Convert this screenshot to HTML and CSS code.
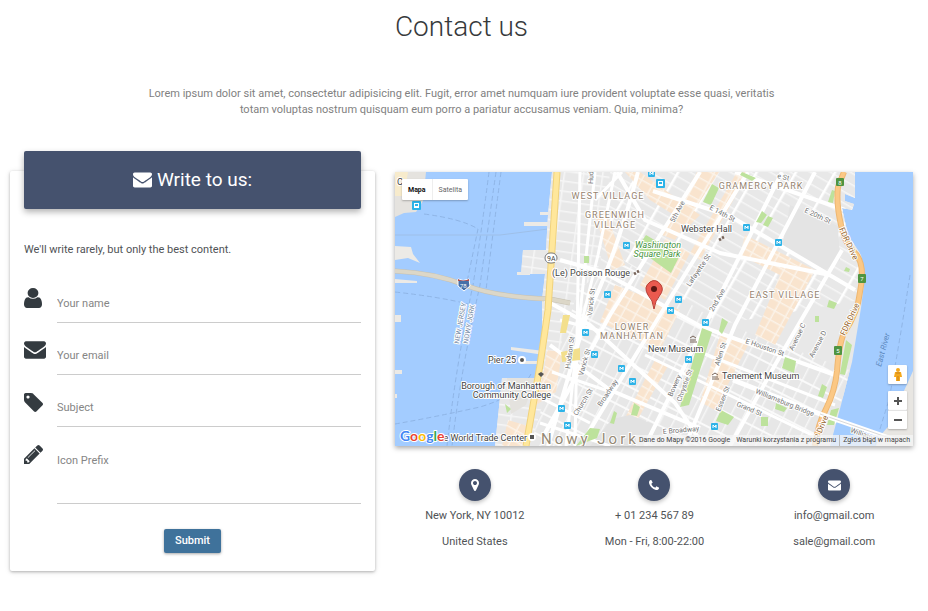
FILE: index.html
```html
<!DOCTYPE html>
<html lang="en">
<head>
<meta charset="utf-8">
<meta name="viewport" content="width=device-width, initial-scale=1">
<title>Contact us</title>
<link rel="stylesheet" href="styles.css">
</head>
<body>
<svg class="sprite" aria-hidden="true">
  <symbol id="envelope" viewBox="0 256 1792 1408"><path d="M1792 710v794q0 66-47 113t-113 47h-1472q-66 0-113-47t-47-113v-794q44 49 101 87 362 246 497 345 57 42 92.500 65.500t94.500 48 110 24.500h2q51 0 110-24.500t94.500-48 92.500-65.500q170-123 498-345 57-39 100-87zm0-294q0 79-49 151t-122 123q-376 261-468 325-10 7-42.500 31t-54 38.500-52 32.500-57.500 27-50 9h-2q-23 0-50-9t-57.500-27-52-32.500-54-38.500-42.500-31q-91-64-262-182.500t-205-142.500q-62-42-117-115.500t-55-136.500q0-78 41.500-130t118.500-52h1472q65 0 112.500 47t47.500 113z"/></symbol>
  <symbol id="user" viewBox="256 128 1280 1536" preserveAspectRatio="none"><path d="M1536 1399q0 109-62.500 187t-150.500 78h-854q-88 0-150.500-78t-62.500-187q0-85 8.500-160.500t31.500-152 58.500-131 94-89 134.500-34.500q131 128 313 128t313-128q76 0 134.500 34.500t94 89 58.500 131 31.500 152 8.500 160.500zm-256-887q0 159-112.500 271.500t-271.500 112.500-271.500-112.500-112.500-271.500 112.500-271.500 271.500-112.500 271.500 112.500 112.500 271.500z"/></symbol>
  <symbol id="tag" viewBox="128 128 1515 1515"><path d="M576 448q0-53-37.500-90.500t-90.500-37.500-90.500 37.500-37.500 90.500 37.500 90.500 90.500 37.500 90.500-37.500 37.500-90.500zm1067 576q0 53-37 90l-491 492q-39 37-91 37-53 0-90-37l-715-716q-38-37-64.500-101t-26.500-117v-416q0-52 38-90t90-38h416q53 0 117 26.500t102 64.500l715 714q37 39 37 91z"/></symbol>
  <symbol id="pencil" viewBox="128 149 1515 1515"><path d="M491 1536l91-91-235-235-91 91v107h128v128h107zm523-928q0-22-22-22-10 0-17 7l-542 542q-7 7-7 17 0 22 22 22 10 0 17-7l542-542q7-7 7-17zm-54-192l416 416-832 832h-416v-416zm683 96q0 53-37 90l-166 166-416-416 166-165q36-38 90-38 53 0 91 38l235 234q37 39 37 91z"/></symbol>
  <symbol id="marker" viewBox="384 128 1024 1536"><path d="M1152 640q0-106-75-181t-181-75-181 75-75 181 75 181 181 75 181-75 75-181zm256 0q0 109-33 179l-364 774q-16 33-47.500 52t-67.500 19-67.500-19-46.500-52l-365-774q-33-70-33-179 0-212 150-362t362-150 362 150 150 362z"/></symbol>
  <symbol id="phone" viewBox="192 128 1408 1408"><path d="M1600 1240q0 27-10 70.500t-21 68.500q-21 50-122 106-94 51-186 51-27 0-52.500-3.500t-57.500-12.500-47.500-14.500-55.500-20.500-49-18q-98-35-175-83-128-79-264.500-215.500t-215.500-264.500q-48-77-83-175-3-9-18-49t-20.500-55.500-14.500-47.500-12.500-57.500-3.500-52.500q0-92 51-186 56-101 106-122 25-11 68.500-21t70.500-10q14 0 21 3 18 6 53 76 11 19 30 54t35 63.500 31 53.500q3 4 17.500 25t21.500 35.500 7 28.500q0 20-28.500 50t-62 55-62 53-28.500 46q0 9 5 22.500t8.500 20.500 14 24 11.500 19q76 137 174 235t235 174q2 1 19 11.500t24 14 20.500 8.500 22.500 5q18 0 46-28.500t53-62 55-62 50-28.500q14 0 28.500 7t35.500 21.500 25 17.500q25 15 53.500 31t63.500 35 54 30q70 35 76 53 3 7 3 21z"/></symbol>
</svg>

<section class="contact">
  <h1 class="contact-title">Contact us</h1>
  <p class="contact-lead">Lorem ipsum dolor sit amet, consectetur adipisicing elit. Fugit, error amet numquam iure provident voluptate esse quasi, veritatis totam voluptas nostrum quisquam eum porro a pariatur accusamus veniam. Quia, minima?</p>

  <div class="contact-grid">
    <form class="card">
      <h2 class="card-header"><svg class="header-icon" aria-hidden="true"><use href="#envelope"/></svg>Write to us:</h2>
      <p class="card-note">We'll write rarely, but only the best content.</p>
      <div class="fields">
        <div class="field">
          <label class="field-icon" for="name" aria-label="Your name"><svg class="icon-user"><use href="#user"/></svg></label>
          <input class="field-input" id="name" type="text" placeholder="Your name">
        </div>
        <div class="field">
          <label class="field-icon" for="email" aria-label="Your email"><svg class="icon-envelope"><use href="#envelope"/></svg></label>
          <input class="field-input" id="email" type="email" placeholder="Your email">
        </div>
        <div class="field">
          <label class="field-icon" for="subject" aria-label="Subject"><svg class="icon-square"><use href="#tag"/></svg></label>
          <input class="field-input" id="subject" type="text" placeholder="Subject">
        </div>
        <div class="field">
          <label class="field-icon" for="message" aria-label="Icon Prefix"><svg class="icon-square"><use href="#pencil"/></svg></label>
          <textarea class="field-input field-area" id="message" placeholder="Icon Prefix"></textarea>
        </div>
      </div>
      <button class="submit" type="submit">Submit</button>
    </form>

    <div class="side">
      <div class="map">
        <svg class="map-canvas" viewBox="395 172 518 274" preserveAspectRatio="xMidYMid slice" role="img" aria-label="Map of Lower Manhattan">
          <defs>
            <pattern id="gridEast" width="34" height="10" patternUnits="userSpaceOnUse" patternTransform="translate(700 200) rotate(30)">
              <rect width="34" height="10" fill="#e8e8e8"/><path d="M0 0H34" stroke="#f6f6f6" stroke-width="3"/><path d="M0 0V10" stroke="#fff" stroke-width="5"/>
            </pattern>
            <pattern id="gridSouth" width="12" height="21" patternUnits="userSpaceOnUse" patternTransform="translate(600 300) rotate(27)">
              <rect width="12" height="21" fill="#e7e7e7"/><path d="M0 0V21" stroke="#f6f6f6" stroke-width="3"/><path d="M0 0H12" stroke="#fafafa" stroke-width="4"/>
            </pattern>
            <pattern id="gridWest" width="19" height="10" patternUnits="userSpaceOnUse" patternTransform="translate(560 200) rotate(8)">
              <rect width="19" height="10" fill="#e8e8e8"/><path d="M0 0H19" stroke="#f6f6f6" stroke-width="3"/><path d="M0 0V10" stroke="#f6f6f6" stroke-width="3"/>
            </pattern>
            <pattern id="shops" width="12" height="10" patternUnits="userSpaceOnUse" patternTransform="translate(700 200) rotate(29)">
              <rect width="12" height="10" fill="#f9e4ce"/><path d="M0 0H12V10" fill="none" stroke="#fbf3e9" stroke-width="3"/>
            </pattern>
            <clipPath id="manhattan"><path d="M552 172H855V198L845 194V201L854 204L852 210L842 208L848 235L861 255L865 275L861 308L852 362L841 405L830 446H495L502 378H538L542 345V300L545 274H521L523 250H546L548 215Z"/></clipPath>
            <g id="metro"><rect x="-4" y="-4" width="7" height="7" rx="1" fill="#2db3e8"/><path d="M-2 1V-2L0 0L1 -2V1" fill="none" stroke="#fff"/></g>
            <g id="bus"><rect x="-5" y="-5" width="9" height="9" rx="1" fill="#2db3e8"/><path d="M-3 -3H2V2H-3Z" fill="#fff"/><path d="M-2 -2H1V0H-2Z" fill="#2db3e8"/></g>
          </defs>

          <!-- water and shorelines -->
          <rect x="395" y="172" width="518" height="274" fill="#a3ccff"/>
          <path d="M395 172H426L423 201L416 212L404 213L395 217Z" fill="#e5e3df"/>
          <path d="M395 172H408L404 196H395Z" fill="#f7ebcc"/>
          <path d="M395 246L411 247L413 254L420 263L408 258L395 260ZM395 279L417 281V283H395ZM395 315H401V322H395ZM395 370H402V374H395ZM395 394H397V398H395Z" fill="#eceae6"/>
          <path d="M540 212H553V215H540ZM524 222H552V226H524ZM517 272H530V275H517ZM511 347L544 351V355L511 350ZM520 361H542V364H520Z" fill="#eceae6"/>
          <path d="M913 371L903 393L893 407L894 420L879 437L876 446H913Z" fill="#e8e6e2"/>
          <g fill="none" stroke="#8fb5e6" stroke-dasharray="5 3">
            <path d="M489 172Q481 235 473 285Q456 365 447 446M496 172Q487 235 480 285Q460 375 452 446M501 172Q492 240 486 290M424 214Q462 219 478 229L467 282M395 292Q440 297 468 304M395 424Q435 417 480 407Q520 395 531 374M910 275Q900 340 889 400Q881 425 875 446"/>
          </g>
          <path d="M395 235H500L572 226" fill="none" stroke="#9ebfe8"/>

          <!-- street grid -->
          <g clip-path="url(#manhattan)">
            <rect x="490" y="172" width="380" height="274" fill="#e8e8e8"/>
            <path d="M540 172H635L574 330L545 400L530 446H490V340Z" fill="url(#gridWest)"/>
            <path d="M610 172H860V300L700 328L600 265Z" fill="url(#gridEast)"/>
            <path d="M578 290L620 258L715 320L855 372L820 446H530Z" fill="url(#gridSouth)"/>
            <path d="M625 172H640L700 215L690 225L650 200ZM745 235L815 270L775 345L755 335L780 275L740 255ZM697 172H719L675 240L662 235ZM666 238L690 253L665 300L640 285ZM615 285L680 310L660 350L600 322ZM720 335L748 345L715 410L700 402ZM655 360L668 366L635 424L625 418ZM595 215L606 212L625 265L612 270ZM737 172H749L700 260L690 253ZM547 350L562 352L556 392L536 405L544 370ZM508 420L528 426L525 446H502Z" fill="url(#shops)"/>
            <path d="M507 378H535L526 405L511 414Z" fill="#e4e2de"/>
            <path d="M790 205L838 226L840 260L825 270L782 248Z" fill="#e4e4e4"/>
            <path d="M630 415L665 429L645 446H590L612 419Z" fill="#e2e2e2"/>
            <g fill="none" stroke="#fff" stroke-linejoin="round">
              <path stroke-width="4" d="M638 172Q615 260 585 320L548 446M700 172L610 315L544 435M748 172L660 315L590 430M782 172L700 335L645 446M815 172L735 325L685 446M842 250L775 365L730 446M617 172L645 220L720 253L830 275M735 172L845 210M653 191L730 216L855 290M560 260L603 272L700 326L835 375M545 300L590 325L675 403L704 446M550 345L610 390L700 428"/>
              <path stroke-width="3" d="M580 172L575 446M595 172L566 446M615 172L598 255L570 370M622 172L595 200M545 400L590 423M560 320L608 333M552 372L614 393M540 423L610 446M645 355L750 405L818 438M695 350L835 405"/>
              <path stroke-width="5" d="M733 380L820 414L895 446"/>
            </g>
            <path d="M563 315H570L566 333H560ZM561 352L580 348V360L562 362Z" fill="#f3df8c"/>
            <path d="M646 235L680 255L671 273L657 263L637 248ZM712 184L719 188L711 205L703 202ZM702 328L712 332L689 405L680 407ZM721 410L734 417L728 425L716 421ZM634 403L640 407L637 416L631 415ZM590 428L600 429L597 438L576 446ZM614 411L617 413L614 424L610 423ZM762 211L767 215L761 223L756 222ZM768 216L773 218L768 227L763 225ZM785 357L796 361L794 373L782 368ZM822 384L827 387L823 398L818 396ZM832 190L835 191L833 203L828 202ZM846 340L852 345L845 375L840 374ZM831 410L839 408L834 425H827ZM829 300L837 303L834 309L827 307ZM742 172L756 178L752 181L740 175ZM584 256H589V263H584ZM761 417H768V426H761ZM776 403L787 408L784 412L775 409ZM722 318L728 322L722 334L719 331ZM846 267L850 269L849 272L844 271ZM815 316H819V322H815ZM505 404L511 409L507 413Z" fill="#bde29c"/>
          </g>

          <!-- highways and bridges -->
          <path d="M395 271Q435 273 465 285T550 299L570 303" fill="none" stroke="#c6c1b2" stroke-width="5"/>
          <path d="M395 271Q435 273 465 285T550 299L570 303" fill="none" stroke="#dcd7c8" stroke-width="4"/>
          <path d="M557 172L552 250L548 310L540 365L526 446" fill="none" stroke="#f0d27c" stroke-width="7"/>
          <path d="M557 172L552 250L548 310L540 365L526 446" fill="none" stroke="#ffe79b" stroke-width="5"/>
          <path d="M844 172L838 187Q836 203 841 225Q844 242 854 252Q866 263 860 292Q858 312 844 333Q839 344 837 371Q835 391 826 409Q818 424 815 446" fill="none" stroke="#eeb772" stroke-width="6"/>
          <path d="M844 172L838 187Q836 203 841 225Q844 242 854 252Q866 263 860 292Q858 312 844 333Q839 344 837 371Q835 391 826 409Q818 424 815 446" fill="none" stroke="#fbc885" stroke-width="4"/>
          <path d="M820 414L895 440" stroke="#fff" stroke-width="5"/><path d="M820 414L895 440" stroke="#d8d8d8"/>

          <!-- transit stops and route shields -->
          <use href="#bus" x="661" y="184"/><use href="#metro" x="652" y="174"/><use href="#metro" x="627" y="246"/><use href="#metro" x="747" y="228"/><use href="#metro" x="779" y="243"/><use href="#metro" x="608" y="295"/><use href="#metro" x="679" y="300"/><use href="#metro" x="671" y="311"/><use href="#metro" x="706" y="323"/><use href="#metro" x="586" y="333"/><use href="#metro" x="595" y="355"/><use href="#metro" x="622" y="369"/><use href="#metro" x="633" y="382"/><use href="#metro" x="689" y="360"/><use href="#metro" x="562" y="409"/><use href="#metro" x="568" y="426"/><use href="#metro" x="715" y="427"/><use href="#bus" x="417" y="206"/>
          <g fill="#4f9440"><rect x="836" y="178" width="8" height="8" rx="1"/><rect x="858" y="274" width="8" height="9" rx="1"/><rect x="834" y="346" width="8" height="9" rx="1"/></g>
          <g class="shield-text" text-anchor="middle"><text x="840" y="185">8</text><text x="862" y="281">7</text><text x="838" y="353">5</text></g>
          <rect x="545" y="253" width="12" height="10" rx="5" fill="#fff" stroke="#777"/><text class="street dark" x="547" y="261">9A</text>
          <path d="M458 279Q463 282 469 279L470 286L464 291L458 286Z" fill="#466fa8" stroke="#fff"/><path d="M458 279Q463 282 469 279V281H458Z" fill="#ae4d4d"/><text class="shield-text" x="460" y="288">78</text>

          <!-- place names -->
          <g class="district" text-anchor="middle">
            <text x="608" y="199">WEST VILLAGE</text><text x="615" y="218">GREENWICH</text><text x="615" y="228">VILLAGE</text>
            <text x="761" y="189">GRAMERCY PARK</text><text x="785" y="298">EAST VILLAGE</text>
            <text x="632" y="330">LOWER</text><text x="632" y="339">MANHATTAN</text>
          </g>
          <text class="city" x="541" y="444">Nowy Jork</text>
          <g class="place">
            <text x="681" y="232">Webster Hall</text><text x="552" y="276">(Le) Poisson Rouge</text>
            <text x="648" y="352">New Museum</text><text x="722" y="379">Tenement Museum</text>
            <text x="488" y="363">Pier 25</text><text x="551" y="389" text-anchor="end">Borough of Manhattan</text><text x="551" y="398" text-anchor="end">Community College</text>
            <text x="527" y="441" text-anchor="end">e World Trade Center</text><text x="397" y="185">C</text>
          </g>
          <g class="park" text-anchor="middle"><text x="658" y="248">Washington</text><text x="657" y="257">Square Park</text></g>
          <g class="street">
            <text transform="translate(593 184) rotate(-88)">Hud</text>
            <text transform="translate(674 223) rotate(-62)">5th Ave</text>
            <text transform="translate(709 209) rotate(28)">E 14th St</text>
            <text transform="translate(804 212) rotate(25)">E 20th St</text>
            <text transform="translate(777 178) rotate(12)">e St</text>
            <text transform="translate(690 287) rotate(-56)">Lafayette St</text>
            <text transform="translate(713 312) rotate(-60)">2nd Ave</text>
            <text transform="translate(592 316) rotate(-84)">Varick St</text>
            <text transform="translate(570 369) rotate(-82)">Hudson St</text>
            <text transform="translate(583 376) rotate(-74)">Varick St</text>
            <text transform="translate(577 416) rotate(-58)">Church St</text>
            <text transform="translate(601 407) rotate(-56)">Broadway</text>
            <text transform="translate(672 397) rotate(-66)">Bowery</text>
            <text transform="translate(681 402) rotate(-70)">Chrystie St</text>
            <text transform="translate(719 366) rotate(-72)">Allen St</text>
            <text transform="translate(720 412) rotate(-68)">Essex St</text>
            <text transform="translate(745 343) rotate(19)">E Houston St</text>
            <text transform="translate(793 351) rotate(-64)">Avenue C</text>
            <text transform="translate(813 358) rotate(-62)">Avenue D</text>
            <text transform="translate(755 393) rotate(22)">Williamsburg Bridge</text>
            <text transform="translate(736 406) rotate(22)">Grand St</text>
            <text transform="translate(663 434) rotate(-5)">E Broadway</text>
            <text transform="translate(850 432) rotate(20)">Williams</text>
          </g>
          <g class="highway"><text transform="translate(839 229) rotate(65)">FDR Drive</text><text transform="translate(845 336) rotate(-65)">FDR Drive</text><text transform="translate(819 440) rotate(-68)">R Drive</text></g>
          <g class="border-name"><text transform="translate(459 344) rotate(-80)">NEW JERSEY</text><text transform="translate(468 344) rotate(-80)">NOWY JORK</text></g>
          <text class="river" transform="translate(881 367) rotate(-75)">East River</text>
          <g fill="#fff"><circle cx="522" cy="360" r="4"/><circle cx="532" cy="437" r="4"/></g>
          <g fill="#555"><circle cx="522" cy="360" r="2"/><path d="M530 435H534V439H530ZM538 374L541 372L544 374L541 377Z"/></g>
          <g fill="none" stroke="#776459"><path d="M634 274L636 273M637 272L639 271M719 240L721 239M722 238L724 237" stroke-width="3"/><path d="M690 338L693 336L696 338M690 342H697M691 339V341M693 339V341M695 339V341M712 375L715 373L718 375M712 379H719M713 376V378M715 376V378M717 376V378"/></g>
          <path d="M654 309Q653 300 648 295Q643 287 650 282Q656 278 661 285Q664 290 660 295Q655 301 654 309Z" fill="#ea5a4f" stroke="#b73e35"/><circle cx="654" cy="289" r="3" fill="#5b1713"/>
          <text class="logo" x="400" y="441"><tspan fill="#4285f4">G</tspan><tspan fill="#ea4335">o</tspan><tspan fill="#fbbc05">o</tspan><tspan fill="#4285f4">g</tspan><tspan fill="#34a853">l</tspan><tspan fill="#ea4335">e</tspan></text>
        </svg>
        <div class="map-types"><button class="map-type active" type="button">Mapa</button><button class="map-type" type="button">Satelita</button></div>
        <div class="map-controls">
          <button class="control" type="button" aria-label="Street View"><svg class="pegman" viewBox="0 0 10 15"><circle cx="5" cy="3" r="2" fill="#f5a81c"/><path d="M2 5H8L9 10H7V14H3V10H1Z" fill="#f5a81c"/><path d="M3 6H7M5 9V14" stroke="#c8811a"/></svg></button>
          <div class="zoom"><button class="control" type="button" aria-label="Zoom in"><svg class="sign" viewBox="0 0 8 8"><path d="M4 0V8M0 4H8"/></svg></button><button class="control" type="button" aria-label="Zoom out"><svg class="sign" viewBox="0 0 8 8"><path d="M0 4H8"/></svg></button></div>
        </div>
        <div class="map-credits"><span>Dane do Mapy ©2016 Google</span><a href="#">Warunki korzystania z programu</a><a class="divided" href="#">Zgłoś błąd w mapach</a></div>
      </div>

      <div class="details">
        <div class="detail"><span class="badge"><svg class="badge-marker"><use href="#marker"/></svg></span><p>New York, NY 10012</p><p>United States</p></div>
        <div class="detail"><span class="badge"><svg class="badge-phone"><use href="#phone"/></svg></span><p>+ 01 234 567 89</p><p>Mon - Fri, 8:00-22:00</p></div>
        <div class="detail"><span class="badge"><svg class="badge-mail"><use href="#envelope"/></svg></span><p>info@gmail.com</p><p>sale@gmail.com</p></div>
      </div>
    </div>
  </div>
</section>
</body>
</html>
```
FILE: styles.css
```css
* { box-sizing: border-box; }

body {
  margin: 0;
  background: #fff;
  color: #505356;
  font-family: Roboto, "Liberation Sans", sans-serif;
  font-size: 11px;
  line-height: 16px;
}

h1, h2, p { margin: 0; }
button, input, textarea { font: inherit; }
svg { display: block; fill: currentColor; }
.sprite { position: absolute; width: 0; height: 0; }

.contact { padding: 9px 15px 32px 10px; }

.contact-title {
  color: #373a3c;
  font-size: 28px;
  font-weight: 300;
  line-height: 36px;
  text-align: center;
}

.contact-lead {
  max-width: 650px;
  margin: 41px auto 53px;
  color: #818181;
  text-align: center;
}

.contact-grid {
  display: grid;
  grid-template-columns: 365fr 518fr;
  gap: 20px;
  align-items: start;
}

.card {
  display: flex;
  flex-direction: column;
  padding: 0 14px 18px;
  border-radius: 2px;
  box-shadow: 0 1px 3px rgba(0, 0, 0, .26), 0 1px 6px rgba(0, 0, 0, .1);
}

.card-header {
  display: flex;
  justify-content: center;
  align-items: center;
  gap: 5px;
  height: 58px;
  margin-top: -20px;
  border-radius: 2px;
  background: #45526e;
  box-shadow: 0 3px 6px rgba(0, 0, 0, .3);
  color: #fff;
  font-size: 19px;
  font-weight: 400;
}

.header-icon { width: 19px; height: 16px; }
.card-note { margin: 33px 0 27px; }
.fields { display: grid; gap: 14px; }
.field { display: grid; grid-template-columns: 33px 1fr; }
.field-icon { display: flex; align-items: center; height: 26px; color: #343b40; }
.icon-user { width: 18px; height: 20px; }
.icon-envelope { width: 22px; height: 18px; }
.icon-square { width: 19px; height: 19px; }

.field-input {
  display: block;
  width: 100%;
  height: 38px;
  padding: 0;
  border: 0;
  border-bottom: 1px solid #ccc;
  outline: 0;
  background: transparent;
  color: #505356;
}

.field-input::placeholder { color: #858585; opacity: 1; }
.field-area { height: 63px; padding-top: 12px; resize: none; }

.submit {
  align-self: center;
  height: 24px;
  margin-top: 25px;
  padding: 0 11px;
  border: 0;
  border-radius: 2px;
  background: #3f729b;
  box-shadow: 0 1px 3px rgba(0, 0, 0, .35);
  color: #fff;
  font-weight: 500;
}

.map {
  position: relative;
  height: 274px;
  margin-top: 1px;
  box-shadow: 0 2px 5px rgba(0, 0, 0, .35);
}

.map-canvas { width: 100%; height: 100%; }
.map-canvas text { stroke: #fff; stroke-width: 2px; stroke-linejoin: round; paint-order: stroke; }
.map-canvas .district { fill: #958370; font-size: 9px; letter-spacing: 1px; }
.map-canvas .city { fill: #958976; font-size: 15px; letter-spacing: 3px; }
.map-canvas .place { fill: #444; font-size: 9px; }
.map-canvas .park { fill: #46943c; font-size: 9px; font-style: italic; }
.map-canvas .street { fill: #737373; font-size: 7px; }
.map-canvas .dark { fill: #444; }
.map-canvas .highway { fill: #98652b; font-size: 8px; }
.map-canvas .border-name { fill: #788ba5; font-size: 7px; }
.map-canvas .river { fill: #5a87bd; font-size: 8px; font-style: italic; }
.map-canvas .river { stroke: none; }
.map-canvas .shield-text, .map-canvas .shield-text text { fill: #fff; stroke: none; font-size: 6px; }
.map-canvas .logo { font-family: Lato, sans-serif; font-size: 14px; font-weight: 700; }

.map-types {
  position: absolute;
  top: 7px;
  left: 7px;
  display: flex;
  height: 21px;
  border-radius: 1px;
  background: #fff;
  box-shadow: 0 1px 2px rgba(0, 0, 0, .25);
}

.map-type {
  padding: 0 6px;
  border: 0;
  background: transparent;
  color: #666;
  font-size: 7px;
}

.map-type.active { border-right: 1px solid #eee; color: #111; font-weight: 700; }

.map-controls {
  position: absolute;
  right: 6px;
  bottom: 17px;
  display: grid;
  gap: 7px;
}

.control {
  display: grid;
  place-items: center;
  width: 19px;
  height: 19px;
  padding: 0;
  border: 0;
  border-radius: 1px;
  background: #fff;
  box-shadow: 0 1px 2px rgba(0, 0, 0, .25);
  color: #555;
}

.zoom .control + .control { border-top: 1px solid #e4e4e4; }
.pegman { width: 10px; height: 15px; }
.sign { width: 8px; height: 8px; fill: none; stroke: #555; stroke-width: 2px; }

.map-credits {
  position: absolute;
  right: 0;
  bottom: 0;
  display: flex;
  gap: 6px;
  padding: 0 3px;
  background: rgba(245, 245, 245, .75);
  color: #444;
  font-size: 7px;
  line-height: 11px;
}

.map-credits a { color: #444; text-decoration: none; }
.map-credits .divided { margin-left: -3px; padding-left: 3px; border-left: 1px solid #bbb; }

.details {
  display: grid;
  grid-template-columns: repeat(3, 1fr);
  margin: 23px -11px 0 -10px;
  text-align: center;
}

.detail { display: grid; justify-items: center; gap: 10px; }

.badge {
  display: grid;
  place-items: center;
  width: 32px;
  height: 32px;
  margin-bottom: -3px;
  border-radius: 50%;
  background: #45526e;
  box-shadow: 0 2px 4px rgba(0, 0, 0, .25);
  color: #fff;
}

.badge-marker { width: 8px; height: 12px; }
.badge-phone { width: 10px; height: 10px; }
.badge-mail { width: 13px; height: 11px; }
```
